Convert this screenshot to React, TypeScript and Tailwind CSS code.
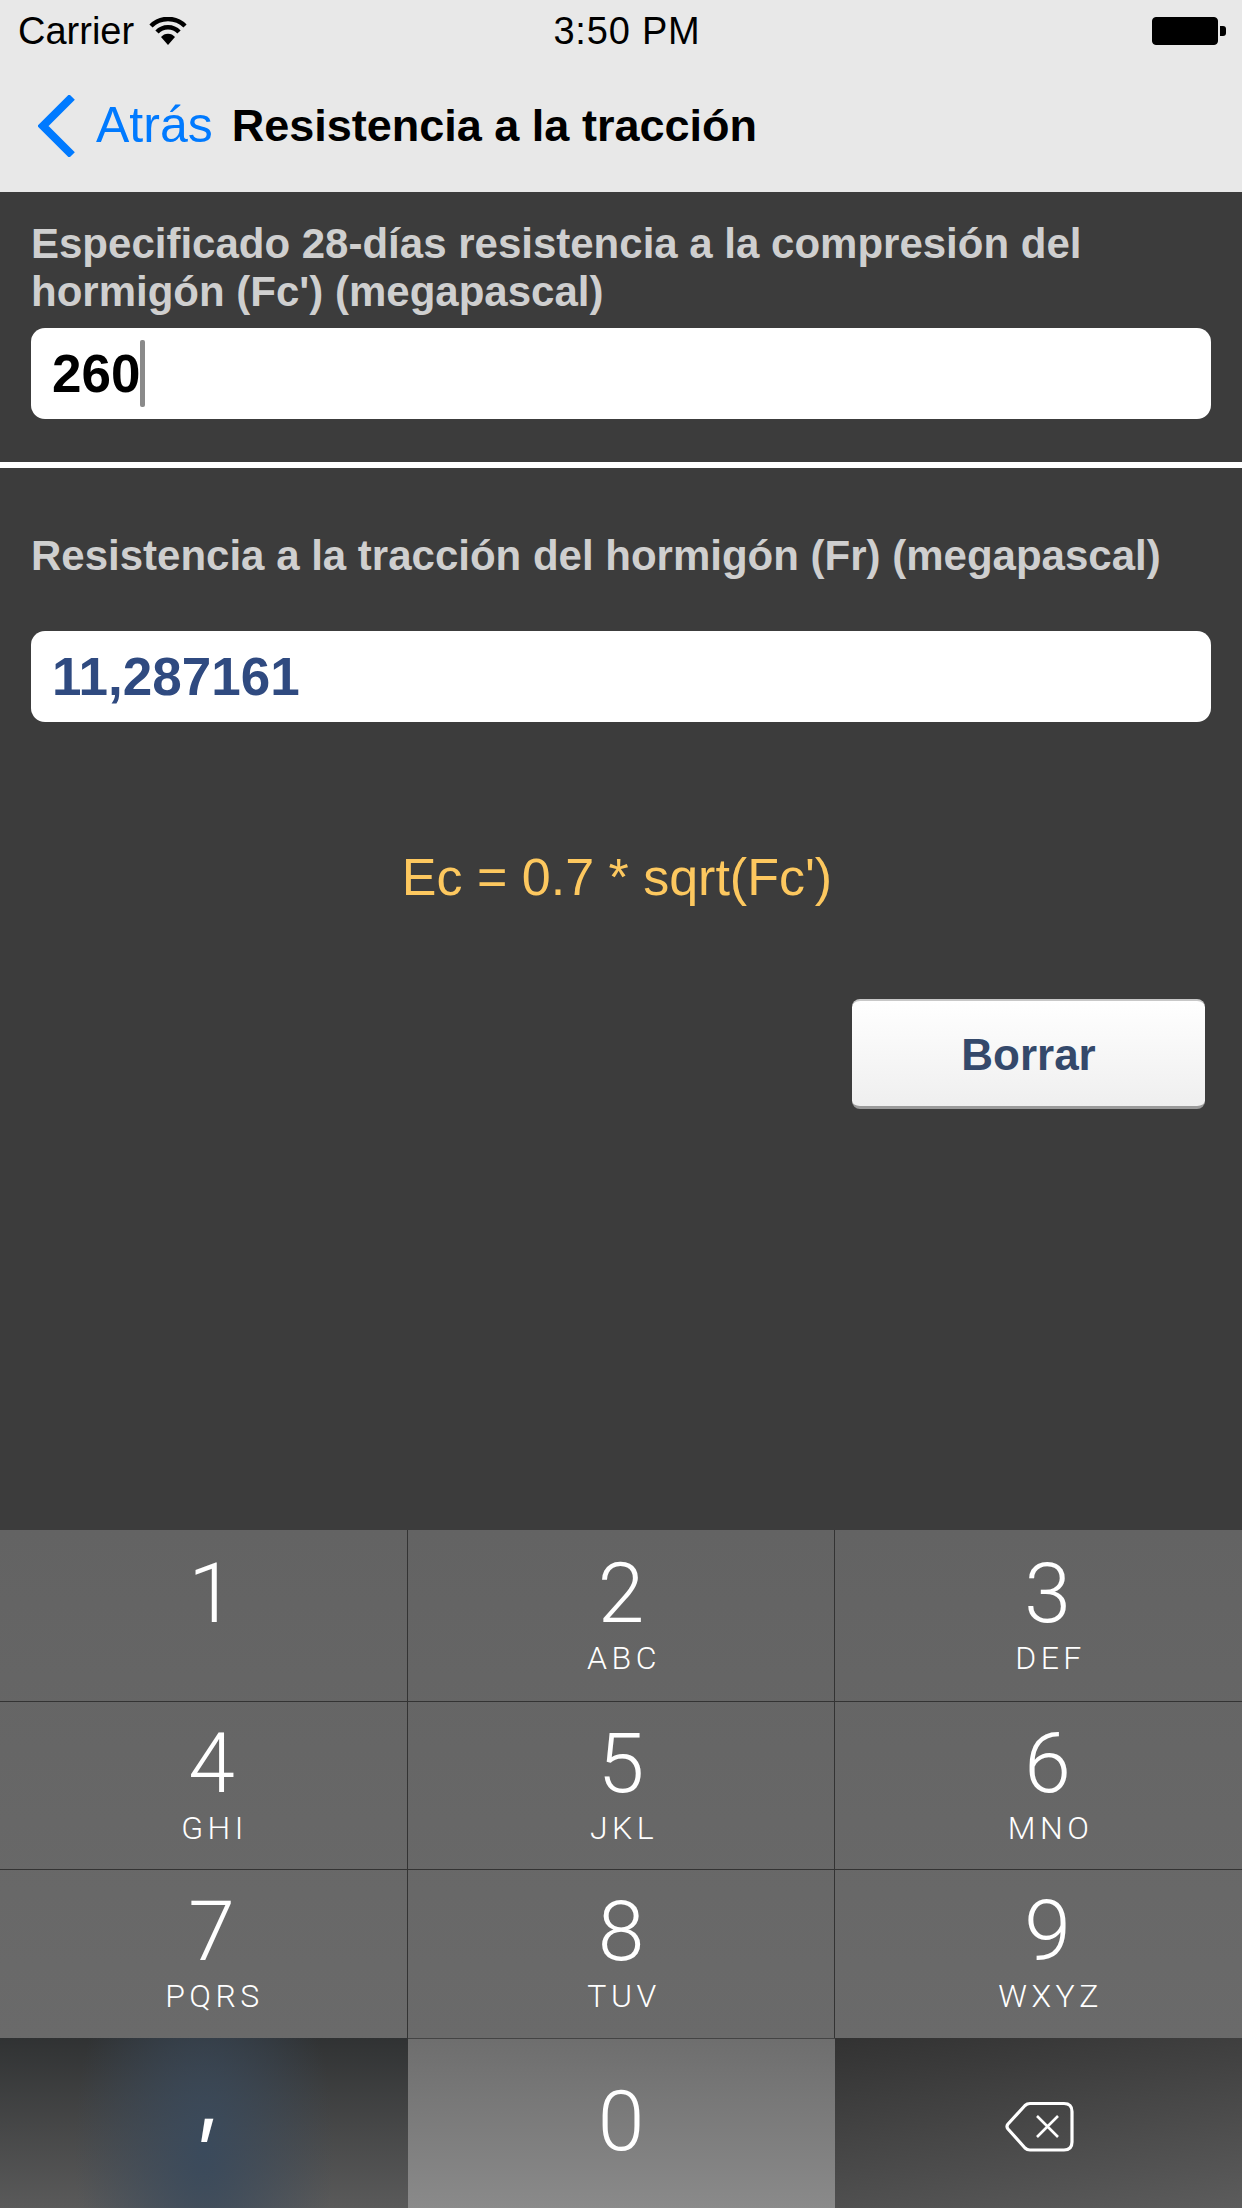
import React from "react";

const digitFont = "font-['Roboto',sans-serif] font-light";

interface KeyProps {
  digit: string;
  letters?: string;
  className?: string;
}

function Key({ digit, letters, className }: KeyProps) {
  return (
    <div className={`flex flex-col items-center text-white ${className ?? ""}`}>
      <span className={`${digitFont} text-[84px] leading-[84px] mt-[20px]`}>{digit}</span>
      {letters && (
        <span className={`${digitFont} text-[32px] leading-[36px] tracking-[4.5px] mt-[4px] pl-[6px]`}>
          {letters}
        </span>
      )}
    </div>
  );
}

function StatusBar() {
  return (
    <div className="flex items-center justify-between h-[62px] pl-[18px] pr-[16px] text-black text-[38px]">
      <div className="flex items-center gap-[15px] w-[400px]">
        <span>Carrier</span>
        <svg width="38" height="28" viewBox="0 0 38 28" fill="none" stroke="#000" strokeWidth="4.5">
          <path d="M2 9 A24 24 0 0 1 36 9" />
          <path d="M8 15 A15 15 0 0 1 30 15" />
          <path d="M19 28 L12 20 A9 9 0 0 1 26 20 Z" fill="#000" stroke="none" />
        </svg>
      </div>
      <span className="ml-[10px] tracking-[0.8px]">3:50 PM</span>
      <div className="flex items-center justify-end w-[400px]">
        <div className="w-[66px] h-[28px] rounded-[4px] border border-black bg-black" />
        <div className="w-[6px] h-[10px] rounded-r-[3px] bg-black ml-[2px]" />
      </div>
    </div>
  );
}

function NavBar() {
  return (
    <div className="flex items-center h-[130px] pl-[38px] pb-[3px]">
      <svg width="38" height="62" viewBox="0 0 38 62" fill="none" stroke="#007aff" strokeWidth="8">
        <path d="M34 2 L5 31 L34 60" />
      </svg>
      <span className="text-[#007aff] text-[50px] ml-[20px]">Atrás</span>
      <span className="text-black font-bold text-[45px] ml-[19px]">Resistencia a la tracción</span>
    </div>
  );
}

export default function App() {
  return (
    <div className="flex flex-col w-[1242px] h-[2208px] overflow-hidden bg-[#3c3c3c] font-['Liberation_Sans',Arial,sans-serif]">
      <header className="bg-[#e8e8e8] h-[192px] shrink-0">
        <StatusBar />
        <NavBar />
      </header>

      <main className="flex-1 flex flex-col">
        <section className="px-[31px] pt-[28px] pb-[43px]">
          <p className="text-[#cfcfcf] font-bold text-[42px] leading-[48px]">
            Especificado 28-días resistencia a la compresión del hormigón (Fc') (megapascal)
          </p>
          <div className="flex items-center mt-[12px] h-[91px] rounded-[14px] bg-white pl-[21px]">
            <span className="text-black font-bold text-[53px]">260</span>
            <span className="w-[5px] h-[67px] rounded-[2px] bg-[#8a8a8a]" />
          </div>
        </section>

        <div className="h-[6px] bg-white" />

        <section className="px-[31px]">
          <p className="text-[#cfcfcf] font-bold text-[42px] leading-[48px] mt-[64px]">
            Resistencia a la tracción del hormigón (Fr) (megapascal)
          </p>
          <div className="flex items-center mt-[51px] h-[91px] rounded-[14px] bg-white pl-[21px]">
            <span className="text-[#2f4a80] font-bold text-[53px]">11,287161</span>
          </div>
        </section>

        <p className="mt-[125px] pr-[8px] text-center text-[#fdc85f] text-[52px] leading-[60px]">
          Ec = 0.7 * sqrt(Fc')
        </p>

        <div className="flex justify-end pr-[37px] mt-[92px]">
          <button className="flex items-center justify-center w-[353px] h-[110px] pt-[2px] rounded-[8px] border-t-[2px] border-b-[3px] border-t-[#c8c8c8] border-b-[#9a9a9a] bg-gradient-to-b from-white to-[#efefef] text-[#34496b] font-bold text-[44px]">
            Borrar
          </button>
        </div>
      </main>

      <div className="shrink-0 h-[678px] flex flex-col">
        <div className="grid grid-cols-[408px_427px_1fr] grid-rows-[172px_168px_168px] bg-gradient-to-b from-[#636363] to-[#6a6a6a]">
          <Key digit="1" className="border-r border-b border-[#333333] pl-[16px] pt-[2px]" />
          <Key digit="2" letters="ABC" className="border-r border-b border-[#333333] pt-[2px]" />
          <Key digit="3" letters="DEF" className="border-b border-[#333333] pl-[18px] pt-[2px]" />
          <Key digit="4" letters="GHI" className="border-r border-b border-[#333333] pl-[16px]" />
          <Key digit="5" letters="JKL" className="border-r border-b border-[#333333]" />
          <Key digit="6" letters="MNO" className="border-b border-[#333333] pl-[18px]" />
          <Key digit="7" letters="PQRS" className="border-r border-[#333333] pl-[16px]" />
          <Key digit="8" letters="TUV" className="border-r border-[#333333]" />
          <Key digit="9" letters="WXYZ" className="border-[#333333] pl-[18px]" />
        </div>
        <div className="flex-1 grid grid-cols-[408px_427px_1fr]">
          <div className="flex items-center justify-center pl-[8px] text-white bg-[radial-gradient(ellipse_130px_240px_at_50%_65%,#3a4a5c_0%,#3a4a5c00_100%),linear-gradient(to_bottom,#303233,#5a5a5a)]">
            <span className="font-['Inter',sans-serif] font-normal text-[84px] leading-[84px] mt-[-52px]">,</span>
          </div>
          <div className="flex items-center justify-center pr-[1px] text-white bg-gradient-to-b from-[#6e6e6e] to-[#8a8a8a] border-t border-[#444444]">
            <span className={`${digitFont} text-[84px] leading-[84px] mt-[-4px]`}>0</span>
          </div>
          <div className="flex items-center justify-center pl-[3px] pt-[8px] bg-[linear-gradient(170deg,#323232,#5c5c5c)]">
            <svg width="70" height="52" viewBox="0 0 70 52" fill="none" stroke="#fff" strokeWidth="3.2" strokeLinejoin="round">
              <path d="M25 2.5 H59 Q67 2.5 67 10.5 V41 Q67 49 59 49 H25 Q22 49 20 47 L3 28 Q1 25.5 3 23 L20 4.5 Q22 2.5 25 2.5 Z" />
              <path d="M32 15 L53 36 M53 15 L32 36" strokeWidth="2.6" />
            </svg>
          </div>
        </div>
      </div>
    </div>
  );
}
